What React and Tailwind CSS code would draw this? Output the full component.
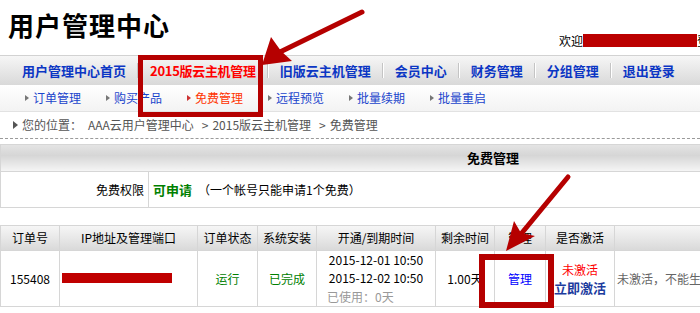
import React from 'react';

const navItems = ['用户管理中心首页', '2015版云主机管理', '旧版云主机管理', '会员中心', '财务管理', '分组管理', '退出登录'];
const subItems = ['订单管理', '购买产品', '免费管理', '远程预览', '批量续期', '批量重启'];

const cols = [
  { title: '订单号', w: 'w-[59px]' },
  { title: 'IP地址及管理端口', w: 'w-[138px]' },
  { title: '订单状态', w: 'w-[60px]' },
  { title: '系统安装', w: 'w-[59px]' },
  { title: '开通/到期时间', w: 'w-[119px]' },
  { title: '剩余时间', w: 'w-[59px]' },
  { title: '管理', w: 'w-[51px]' },
  { title: '是否激活', w: 'w-[69px]' },
  { title: '', w: 'w-[300px]' },
];

const Arrow = ({ small }) => (
  <span
    className={
      small
        ? 'inline-block w-0 h-0 border-y-[3px] border-y-transparent border-l-[4px] border-l-[#777]'
        : 'inline-block w-0 h-0 border-y-[4px] border-y-transparent border-l-[5px] border-l-[#555]'
    }
  />
);

const Annotations = () => (
  <svg className="absolute left-0 top-0 pointer-events-none" width="700" height="313" viewBox="0 0 700 313">
    <rect x="140.5" y="57.5" width="120" height="57" fill="none" stroke="#b50000" strokeWidth="5" />
    <line x1="362" y1="12" x2="280" y2="52" stroke="#b50000" strokeWidth="5" strokeLinecap="round" />
    <polygon points="262,65 271,37 281,51 292,61" fill="#b50000" />
    <rect x="482" y="257" width="69" height="48" fill="none" stroke="#b50000" strokeWidth="6" />
    <line x1="568" y1="177" x2="521" y2="234" stroke="#b50000" strokeWidth="5" strokeLinecap="round" />
    <polygon points="506,251 514,221 521,233 535,236" fill="#b50000" />
  </svg>
);

export default function App() {
  return (
    <div className="relative w-[700px] h-[313px] overflow-hidden bg-white font-['Noto_Sans_CJK_SC',sans-serif] text-black">
      {/* header */}
      <div className="flex h-[55px]">
        <div className="w-[559px] shrink-0 pl-[8px] pt-[10px] text-[26px] font-bold leading-[30px] tracking-[1px]">用户管理中心</div>
        <div className="shrink-0 flex items-center pt-[26px] h-[55px] text-[12px] leading-[13px] whitespace-nowrap">
          <span>欢迎</span>
          <span className="inline-block w-[114px] h-[13px] bg-[#bb0000]" />
          <span>登录</span>
        </div>
      </div>

      {/* main nav */}
      <div className="h-[30px] border-t border-[#d2d2d2] bg-gradient-to-b from-[#f6f6f6] to-[#d9d9d9] flex items-center pl-[11px] whitespace-nowrap">
        {navItems.map((item, i) => (
          <React.Fragment key={item}>
            {i > 0 && <span className="w-px h-[15px] bg-[#c4c4c4] border-r border-white box-content" />}
            <span className={`px-[11px] text-[13px] font-bold leading-[16px] ${i === 1 ? 'text-[#ff0000] tracking-[-0.3px]' : 'text-[#0b36c4]'}`}>{item}</span>
          </React.Fragment>
        ))}
      </div>

      {/* sub nav */}
      <div className="h-[27px] border-b border-[#e2e2e2] bg-gradient-to-b from-white to-[#f3f3f3] flex items-center pl-[25px] whitespace-nowrap">
        {subItems.map((item, i) => (
          <div key={item} className="w-[81px] shrink-0 flex items-center gap-[4px]">
            {i === 2 ? (
              <span className="inline-block w-0 h-0 border-y-[3px] border-y-transparent border-l-[4px] border-l-[#cc3333]" />
            ) : (
              <Arrow small />
            )}
            <span className={`text-[12px] leading-[14px] ${i === 2 ? 'text-[#ff3300]' : 'text-[#1a44cc]'}`}>{item}</span>
          </div>
        ))}
      </div>

      {/* breadcrumb */}
      <div className="h-[27px] border-b border-dashed border-[#9a9a9a] flex items-center pl-[13px] text-[12px] leading-[14px] text-[#555] whitespace-nowrap">
        <Arrow />
        <span className="ml-[4px]">您的位置：</span>
        <span className="ml-[6px]">AAA云用户管理中心</span>
        <span className="ml-[8px]">&gt;</span>
        <span className="ml-[4px]">2015版云主机管理</span>
        <span className="ml-[8px]">&gt;</span>
        <span className="ml-[4px]">免费管理</span>
      </div>

      {/* free table */}
      <div className="mt-[5px] w-[986px] border border-[#d6d6d6]">
        <div className="h-[27px] border-b border-[#d6d6d6] bg-gradient-to-b from-[#e4e4e4] via-[#d6d6d6] via-40% to-[#f5f5f5] flex items-center justify-center text-[13px] font-bold leading-[16px]">
          免费管理
        </div>
        <div className="flex h-[35px] text-[12px] leading-[14px]">
          <div className="w-[148px] shrink-0 border-r border-[#d6d6d6] flex items-center justify-end pr-[4px]">免费权限</div>
          <div className="flex items-center pl-[4px] whitespace-nowrap">
            <span className="text-[#008000] font-bold text-[13px]">可申请</span>
            <span className="ml-[6px]">（一个帐号只能申请1个免费）</span>
          </div>
        </div>
      </div>

      {/* order table */}
      <div className="mt-[17px] w-[1000px] border-t border-b border-l border-[#d6d6d6] text-[12px] leading-[14px]">
        <div className="flex h-[25px] bg-gradient-to-b from-[#f6f6f6] via-[#e8e8e8] to-[#d9d9d9] border-b border-[#d6d6d6]">
          {cols.map((c, i) => (
            <div key={i} className={`${c.w} shrink-0 border-r border-[#d6d6d6] flex items-center justify-center whitespace-nowrap`}>{c.title}</div>
          ))}
        </div>
        <div className="flex h-[55px]">
          <div className="w-[59px] shrink-0 border-r border-[#d6d6d6] flex items-center justify-center">155408</div>
          <div className="w-[138px] shrink-0 border-r border-[#d6d6d6] flex items-center pl-[2px]">
            <span className="inline-block w-[110px] h-[10px] bg-[#c00000] mt-[-1px]" />
          </div>
          <div className="w-[60px] shrink-0 border-r border-[#d6d6d6] flex items-center justify-center text-[#008000]">运行</div>
          <div className="w-[59px] shrink-0 border-r border-[#d6d6d6] flex items-center justify-center text-[#008000]">已完成</div>
          <div className="w-[119px] shrink-0 border-r border-[#d6d6d6] flex flex-col items-center justify-center leading-[18.5px] whitespace-nowrap">
            <span>2015-12-01 10:50</span>
            <span>2015-12-02 10:50</span>
            <span className="text-[#999] self-start pl-[10px]">已使用：0天</span>
          </div>
          <div className="w-[59px] shrink-0 border-r border-[#d6d6d6] flex items-center justify-center">1.00天</div>
          <div className="w-[51px] shrink-0 border-r border-[#d6d6d6] flex items-center justify-center text-[#0000ff]">管理</div>
          <div className="w-[69px] shrink-0 border-r border-[#d6d6d6] flex flex-col items-center justify-center leading-[18px]">
            <span className="text-[#ff0000]">未激活</span>
            <span className="text-[#1d3c9e] font-bold text-[13px]">立即激活</span>
          </div>
          <div className="w-[300px] shrink-0 flex items-center pl-[2px] text-[#666] whitespace-nowrap">未激活，不能生成远程连接</div>
        </div>
      </div>

      <Annotations />
    </div>
  );
}
